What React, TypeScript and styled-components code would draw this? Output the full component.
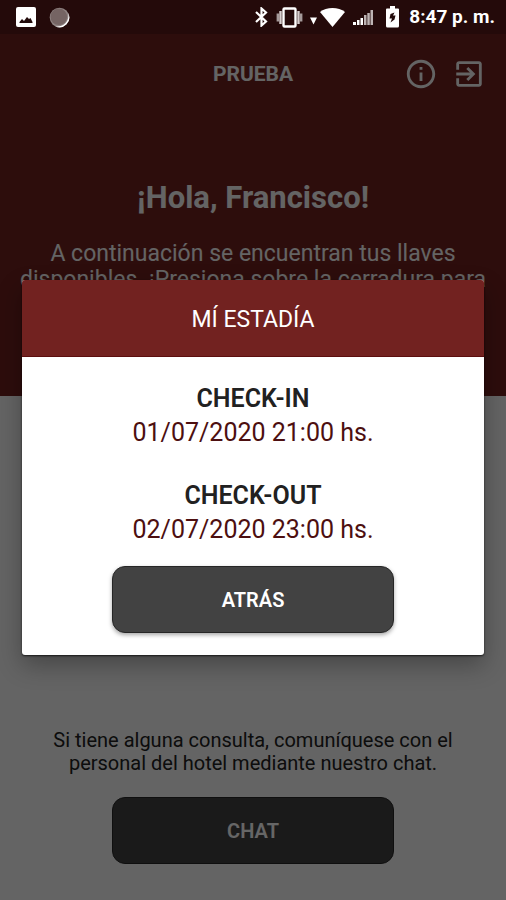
import React from "react";
import styled, { createGlobalStyle, css } from "styled-components";

const color = {
  brand: "#722220",
  brandDark: "#5a1b1a",
  surface: "#fafafa",
  ink: "#212121",
  button: "#424242",
  wine: "#4d0f10",
};

const GlobalStyle = createGlobalStyle`
  *, *::before, *::after { box-sizing: border-box; }
  body {
    margin: 0;
    background: ${color.surface};
    color: ${color.ink};
    font-family: Roboto, "Liberation Sans", sans-serif;
  }
  h1, h2, h3, p, dl, dt, dd { margin: 0; }
`;

const Screen = styled.div`
  position: relative;
  display: flex;
  flex-direction: column;
  min-height: 100vh;
  background: ${color.surface};
`;

const StatusBar = styled.div`
  display: flex;
  align-items: center;
  justify-content: space-between;
  height: 34px;
  padding: 0 11px 0 16px;
  background: ${color.brandDark};
  color: #fff;
`;

const StatusGroup = styled.div<{ $gap: number }>`
  position: relative;
  z-index: 3;
  display: flex;
  align-items: center;
  gap: ${(p) => p.$gap}px;

  svg {
    display: block;
    flex: none;
  }
`;

const Power = styled.div`
  display: flex;
  align-items: center;
  gap: 10px;
  padding-left: 5px;
`;

const Clock = styled.time`
  font-size: 19px;
  line-height: 22px;
  font-weight: 700;
`;

const Hero = styled.header`
  flex: none;
  min-height: 362px;
  background: ${color.brand};
  color: ${color.surface};
  text-align: center;
`;

const Toolbar = styled.div`
  display: grid;
  grid-template-columns: 1fr auto 1fr;
  align-items: center;
  height: 80px;
  padding: 0 20px;
`;

const ToolbarTitle = styled.h1`
  grid-column: 2;
  font-size: 21px;
  line-height: 24px;
  font-weight: 700;
`;

const ToolbarActions = styled.div`
  display: flex;
  justify-content: flex-end;
  gap: 14px;
`;

const IconButton = styled.button`
  display: block;
  padding: 0;
  border: 0;
  background: none;
  color: inherit;
  cursor: pointer;

  svg {
    display: block;
  }
`;

const Welcome = styled.div`
  display: flex;
  flex-direction: column;
  gap: 25px;
  padding: 66px 16px 0;
`;

const Greeting = styled.h2`
  font-size: 31px;
  line-height: 36px;
  font-weight: 700;
`;

const Intro = styled.p`
  font-size: 23px;
  line-height: 26px;
`;

const Help = styled.footer`
  display: flex;
  flex-direction: column;
  align-items: center;
  gap: 22px;
  margin-top: auto;
  padding: 0 48px 36px;
  text-align: center;
  font-size: 20px;
  line-height: 23px;
`;

const raised = css`
  box-shadow: 0 2px 4px rgba(0, 0, 0, 0.35);
`;

const ActionButton = styled.button<{ $raised?: boolean }>`
  width: 282px;
  max-width: 100%;
  height: 67px;
  border: 1px solid #262626;
  border-radius: 13px;
  background: ${color.button};
  color: #fff;
  font-family: inherit;
  font-size: 20px;
  line-height: 24px;
  font-weight: 600;
  cursor: pointer;
  ${(p) => p.$raised && raised}
`;

const Scrim = styled.div`
  position: absolute;
  inset: 0;
  z-index: 2;
  display: flex;
  align-items: center;
  justify-content: center;
  padding: 35px 22px 0;
  background: rgba(0, 0, 0, 0.6);
`;

const Dialog = styled.section`
  width: 100%;
  border-radius: 3px;
  overflow: hidden;
  background: #fff;
  text-align: center;
  box-shadow: 0 1px 2px rgba(0, 0, 0, 0.7), 0 10px 24px rgba(0, 0, 0, 0.3);
`;

const DialogTitle = styled.h2`
  padding: 27px 16px 23px;
  border-bottom: 1px solid #5c0e0e;
  background: ${color.brand};
  color: #fff;
  font-size: 23px;
  line-height: 26px;
  font-weight: 400;
`;

const DialogBody = styled.div`
  display: flex;
  flex-direction: column;
  align-items: center;
  gap: 19px;
  padding: 25px 16px 22px;
`;

const Stay = styled.dl`
  display: grid;
  gap: 29px;
`;

const StayLabel = styled.dt`
  font-size: 25px;
  line-height: 34px;
  font-weight: 600;
`;

const StayDate = styled.dd`
  color: ${color.wine};
  font-size: 25px;
  line-height: 34px;
`;

const PictureIcon = () => (
  <svg width="20" height="20" viewBox="0 0 20 20" aria-hidden="true">
    <rect width="20" height="20" rx="2" fill="#fff" />
    <path d="M3.500 16v-1l2.500-3 2 2 3-4 2 2 1.500-1 2 4v1z" fill="#230b0b" />
  </svg>
);

const MoonIcon = () => (
  <svg width="21" height="21" viewBox="0 0 21 21" aria-hidden="true">
    <circle cx="10.5" cy="10.5" r="9.8" fill="#8f8382" />
    <circle cx="9.8" cy="9.8" r="8.300" fill="#756463" />
    <path d="M19.200 6a9.800 9.800 0 0 1-13 13.300 11 11 0 0 0 13-13.300z" fill="#fff" />
  </svg>
);

const BluetoothIcon = () => (
  <svg width="15" height="20" viewBox="0 0 15 20" aria-hidden="true">
    <path d="M2 5l10 9.500L7.500 18.500v-17L12 5.500 2 15" fill="none" stroke="#fff" strokeWidth="2.200" strokeLinejoin="miter" />
  </svg>
);

const VibrateIcon = () => (
  <svg width="27" height="21" viewBox="0 0 27 21" aria-hidden="true">
    <rect x="7.500" y="1.500" width="12" height="18" rx="1" fill="none" stroke="#fff" strokeWidth="2.400" />
    <path d="M4.500 4v13M22.500 4v13" stroke="#d8d0d0" strokeWidth="2.400" />
    <path d="M1.800 6.500v8M25.200 6.500v8" stroke="#a49a9a" strokeWidth="2.400" />
  </svg>
);

const WifiIcon = () => (
  <svg width="36" height="20" viewBox="0 0 36 20" aria-hidden="true">
    <path d="M0 10.500h7L3.500 17.500z" fill="#fff" />
    <path d="M10 5c3-2.600 8-4 12.500-4S32 2.400 35 5L22.500 20z" fill="#fff" />
  </svg>
);

const SignalIcon = () => (
  <svg width="21" height="18" viewBox="0 0 21 18" aria-hidden="true">
    <path d="M0 14h3v3H0zM4 12h2.500v5H4zM7.500 10H10v7H7.500z" fill="#fff" />
    <path d="M11 7h2.500v10H11zM14.300 5h2.500v12h-2.500zM17.500 2H20v15h-2.500z" fill="#bdb3b3" />
  </svg>
);

const BatteryIcon = () => (
  <svg width="13" height="22" viewBox="0 0 13 22" aria-hidden="true">
    <path d="M4 0h5v2.500h3a1 1 0 0 1 1 1V20a1.500 1.500 0 0 1-1.500 1.500h-10A1.500 1.500 0 0 1 0 20V3.500a1 1 0 0 1 1-1h3z" fill="#fff" />
    <path d="M8.500 6.500l-4 1.500-1 4.500h2.500l-1.500 4 4-3 1-4H7z" fill="#230b0b" />
  </svg>
);

const InfoIcon = () => (
  <svg width="34" height="34" viewBox="0 0 24 24" fill="currentColor" aria-hidden="true">
    <path d="M11 7h2v2h-2zm0 4h2v6h-2zm1-9C6.480 2 2 6.480 2 12s4.480 10 10 10 10-4.480 10-10S17.520 2 12 2zm0 18c-4.410 0-8-3.590-8-8s3.590-8 8-8 8 3.590 8 8-3.590 8-8 8z" />
  </svg>
);

const ExitIcon = () => (
  <svg width="34" height="34" viewBox="0 0 24 24" fill="currentColor" aria-hidden="true">
    <path d="M10.090 15.590L11.500 17l5-5-5-5-1.410 1.410L12.670 11H3v2h9.670l-2.580 2.590zM19 3H5c-1.110 0-2 .9-2 2v4h2V5h14v14H5v-4H3v4c0 1.100.89 2 2 2h14c1.100 0 2-.9 2-2V5c0-1.100-.9-2-2-2z" />
  </svg>
);

const stay = [
  { label: "CHECK-IN", date: "01/07/2020 21:00 hs." },
  { label: "CHECK-OUT", date: "02/07/2020 23:00 hs." },
];

export default function App() {
  return (
    <>
      <GlobalStyle />
      <Screen>
        <StatusBar>
          <StatusGroup $gap={13}>
            <PictureIcon />
            <MoonIcon />
          </StatusGroup>
          <StatusGroup $gap={7}>
            <BluetoothIcon />
            <VibrateIcon />
            <WifiIcon />
            <SignalIcon />
            <Power>
              <BatteryIcon />
              <Clock>8:47 p. m.</Clock>
            </Power>
          </StatusGroup>
        </StatusBar>
        <Hero>
          <Toolbar>
            <ToolbarTitle>PRUEBA</ToolbarTitle>
            <ToolbarActions>
              <IconButton type="button" aria-label="Información">
                <InfoIcon />
              </IconButton>
              <IconButton type="button" aria-label="Salir">
                <ExitIcon />
              </IconButton>
            </ToolbarActions>
          </Toolbar>
          <Welcome>
            <Greeting>¡Hola, Francisco!</Greeting>
            <Intro>
              A continuación se encuentran tus llaves disponibles. ¡Presiona sobre la cerradura para
            </Intro>
          </Welcome>
        </Hero>
        <Help>
          <p>Si tiene alguna consulta, comuníquese con el personal del hotel mediante nuestro chat.</p>
          <ActionButton type="button">CHAT</ActionButton>
        </Help>
        <Scrim>
          <Dialog role="dialog" aria-modal="true" aria-labelledby="stay-title">
            <DialogTitle id="stay-title">MÍ ESTADÍA</DialogTitle>
            <DialogBody>
              <Stay>
                {stay.map((entry) => (
                  <div key={entry.label}>
                    <StayLabel>{entry.label}</StayLabel>
                    <StayDate>{entry.date}</StayDate>
                  </div>
                ))}
              </Stay>
              <ActionButton type="button" $raised>
                ATRÁS
              </ActionButton>
            </DialogBody>
          </Dialog>
        </Scrim>
      </Screen>
    </>
  );
}
